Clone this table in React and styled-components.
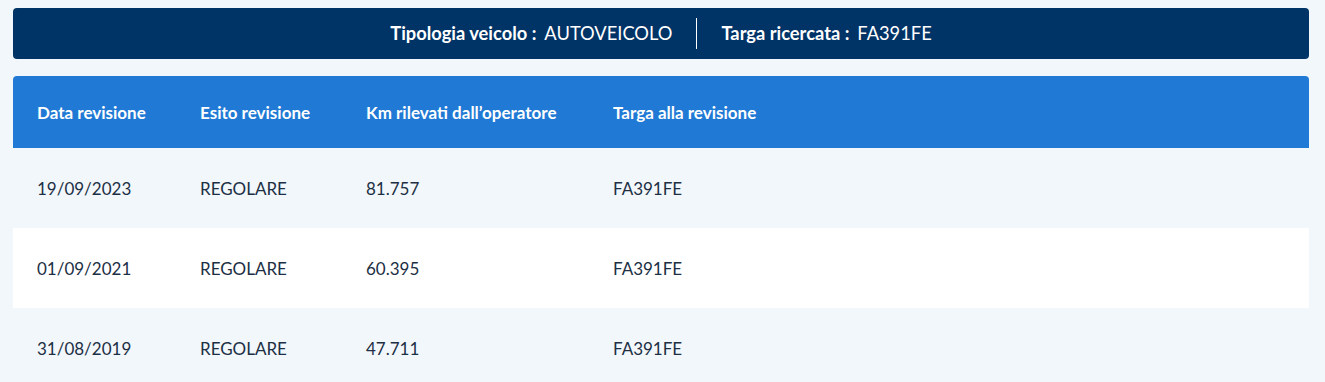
import React from 'react';
import styled, { createGlobalStyle } from 'styled-components';

const GlobalStyle = createGlobalStyle`
  body {
    margin: 0;
    background: #f2f7fb;
    font-family: "Lato", sans-serif;
    color: #17324d;
  }
`;

const Page = styled.div`
  padding: 8px 16px 0 13px;
  display: flex;
  flex-direction: column;
  gap: 17px;
`;

const InfoBar = styled.div`
  background: #003366;
  border-radius: 4px;
  height: 51px;
  display: flex;
  align-items: center;
  justify-content: center;
  color: #fff;
  font-size: 18.3px;
`;

const InfoItem = styled.div`
  display: flex;
  align-items: center;
  gap: 8px;
  padding: 0 24px;
  & + & {
    border-left: 1px solid #fff;
  }
  line-height: 31px;
`;

const Label = styled.span`
  font-weight: 700;
`;

const Table = styled.div`
  border-radius: 4px 4px 0 0;
  overflow: hidden;
`;

const Row = styled.div`
  display: grid;
  grid-template-columns: 163px 166px 247px 1fr;
  padding-left: 24px;
  align-items: center;
  height: ${p => (p.$head ? 72 : 80)}px;
  background: ${p => (p.$head ? '#2079d4' : p.$alt ? '#ffffff' : '#f2f7fb')};
  color: ${p => (p.$head ? '#ffffff' : '#1c2f44')};
  font-weight: ${p => (p.$head ? 700 : 400)};
  font-size: 17px;
`;

const Cell = styled.div``;

const rows = [
  ['19/09/2023', 'REGOLARE', '81.757', 'FA391FE'],
  ['01/09/2021', 'REGOLARE', '60.395', 'FA391FE'],
  ['31/08/2019', 'REGOLARE', '47.711', 'FA391FE'],
];

export default function App() {
  return (
    <>
      <GlobalStyle />
      <Page>
        <InfoBar>
          <InfoItem>
            <Label>Tipologia veicolo :</Label>
            <span>AUTOVEICOLO</span>
          </InfoItem>
          <InfoItem>
            <Label>Targa ricercata :</Label>
            <span>FA391FE</span>
          </InfoItem>
        </InfoBar>
        <Table>
          <Row $head>
            <Cell>Data revisione</Cell>
            <Cell>Esito revisione</Cell>
            <Cell>Km rilevati dall’operatore</Cell>
            <Cell>Targa alla revisione</Cell>
          </Row>
          {rows.map((r, i) => (
            <Row key={i} $alt={i % 2 === 1}>
              {r.map((c, j) => (
                <Cell key={j}>{c}</Cell>
              ))}
            </Row>
          ))}
        </Table>
      </Page>
    </>
  );
}
